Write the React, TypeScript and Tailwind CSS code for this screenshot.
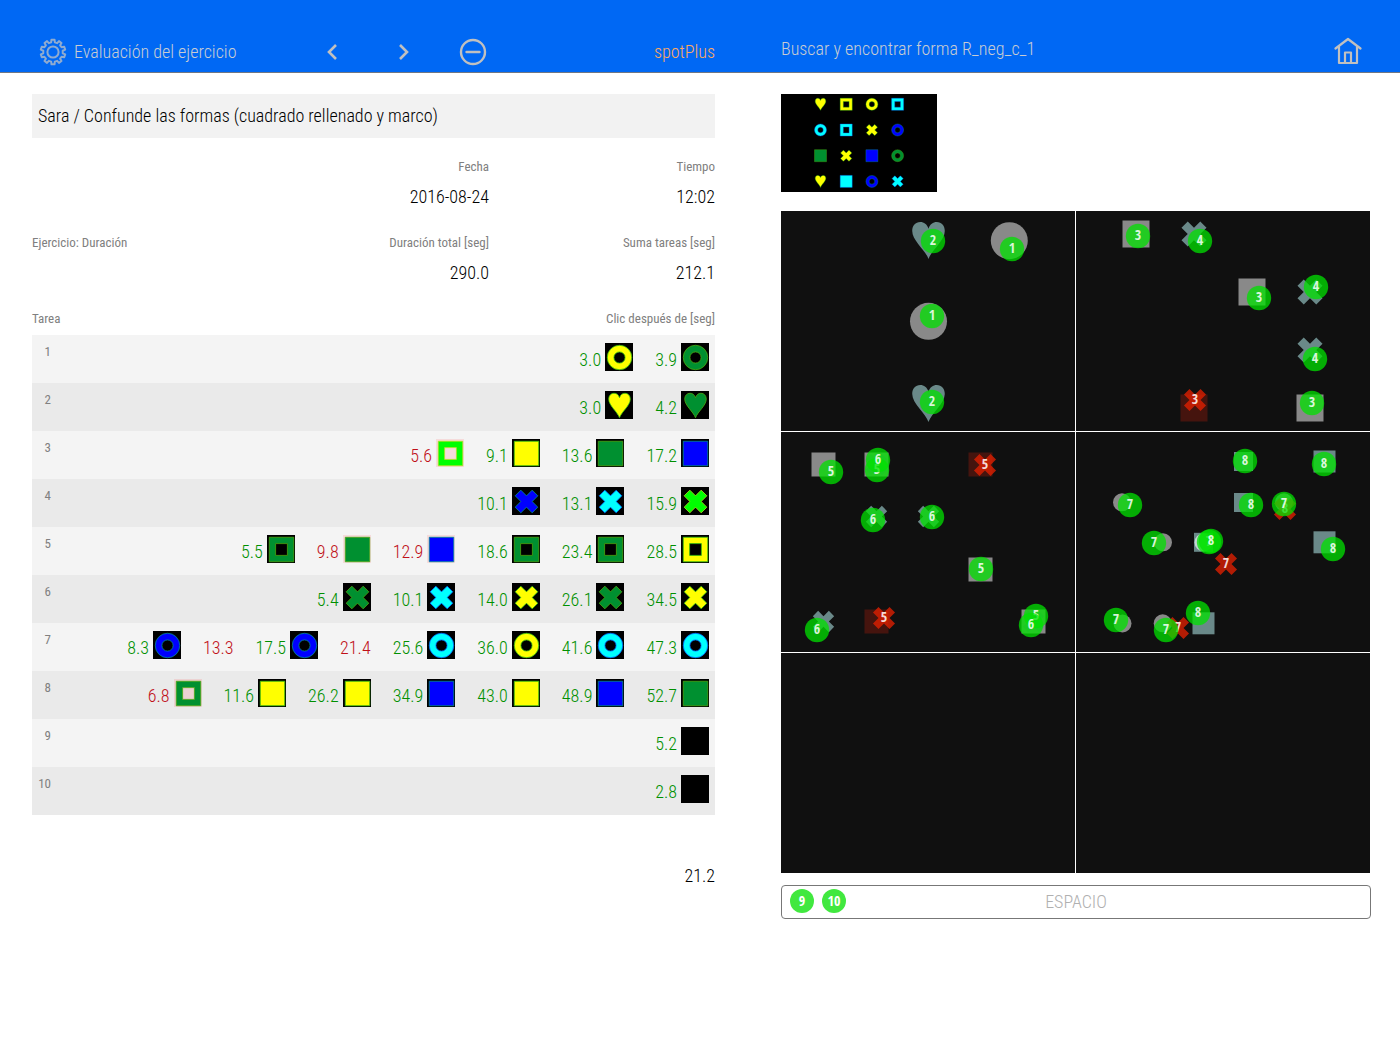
import React from 'react';

type ShapeKind = 'square' | 'frame' | 'ring' | 'circle' | 'heart' | 'cross';

interface Click {
  time: string;
  shape?: ShapeKind | 'blank';
  color?: string;
  wrong?: boolean;
}

// [kind, center x, center y, size, color]
type Target = [ShapeKind, number, number, number, string];

// [label, center x, center y, wrong]
type Marker = [string, number, number, boolean?];

interface Board {
  targets: Target[];
  markers: Marker[];
}

const YELLOW = '#ffff00';
const GREEN = '#009030';
const LIME = '#00ff00';
const BLUE = '#0000ff';
const CYAN = '#00ffff';

const GRAY = '#898989';
const TEAL = '#6a8989';
const MISSED = '#45140e';

const edges: Record<string, string> = {
  [YELLOW]: '#30c010',
  [GREEN]: '#50a810',
  [LIME]: '#b8e020',
  [BLUE]: '#009090',
  [CYAN]: '#0060ff',
};

const tasks: Click[][] = [
  [
    { time: '3.0', shape: 'ring', color: YELLOW },
    { time: '3.9', shape: 'ring', color: GREEN },
  ],
  [
    { time: '3.0', shape: 'heart', color: YELLOW },
    { time: '4.2', shape: 'heart', color: GREEN },
  ],
  [
    { time: '5.6', shape: 'frame', color: LIME, wrong: true },
    { time: '9.1', shape: 'square', color: YELLOW },
    { time: '13.6', shape: 'square', color: GREEN },
    { time: '17.2', shape: 'square', color: BLUE },
  ],
  [
    { time: '10.1', shape: 'cross', color: BLUE },
    { time: '13.1', shape: 'cross', color: CYAN },
    { time: '15.9', shape: 'cross', color: LIME },
  ],
  [
    { time: '5.5', shape: 'frame', color: GREEN },
    { time: '9.8', shape: 'square', color: GREEN, wrong: true },
    { time: '12.9', shape: 'square', color: BLUE, wrong: true },
    { time: '18.6', shape: 'frame', color: GREEN },
    { time: '23.4', shape: 'frame', color: GREEN },
    { time: '28.5', shape: 'frame', color: YELLOW },
  ],
  [
    { time: '5.4', shape: 'cross', color: GREEN },
    { time: '10.1', shape: 'cross', color: CYAN },
    { time: '14.0', shape: 'cross', color: YELLOW },
    { time: '26.1', shape: 'cross', color: GREEN },
    { time: '34.5', shape: 'cross', color: YELLOW },
  ],
  [
    { time: '8.3', shape: 'ring', color: BLUE },
    { time: '13.3', wrong: true },
    { time: '17.5', shape: 'ring', color: BLUE },
    { time: '21.4', wrong: true },
    { time: '25.6', shape: 'ring', color: CYAN },
    { time: '36.0', shape: 'ring', color: YELLOW },
    { time: '41.6', shape: 'ring', color: CYAN },
    { time: '47.3', shape: 'ring', color: CYAN },
  ],
  [
    { time: '6.8', shape: 'frame', color: GREEN, wrong: true },
    { time: '11.6', shape: 'square', color: YELLOW },
    { time: '26.2', shape: 'square', color: YELLOW },
    { time: '34.9', shape: 'square', color: BLUE },
    { time: '43.0', shape: 'square', color: YELLOW },
    { time: '48.9', shape: 'square', color: BLUE },
    { time: '52.7', shape: 'square', color: GREEN },
  ],
  [{ time: '5.2', shape: 'blank' }],
  [{ time: '2.8', shape: 'blank' }],
];

const preview: [ShapeKind, string][][] = [
  [['heart', YELLOW], ['frame', YELLOW], ['ring', YELLOW], ['frame', CYAN]],
  [['ring', CYAN], ['frame', CYAN], ['cross', YELLOW], ['ring', BLUE]],
  [['square', GREEN], ['cross', YELLOW], ['square', BLUE], ['ring', GREEN]],
  [['heart', YELLOW], ['square', CYAN], ['ring', BLUE], ['cross', CYAN]],
];

const boards: Board[] = [
  {
    targets: [
      ['heart', 147.5, 29.5, 37, TEAL],
      ['circle', 228.3, 29.7, 37, GRAY],
      ['circle', 147.5, 110.3, 37, GRAY],
      ['heart', 147.5, 192.5, 37, TEAL],
    ],
    markers: [['2', 152, 30], ['1', 231, 38], ['1', 151, 105], ['2', 151, 191]],
  },
  {
    targets: [
      ['square', 60, 23, 27, GRAY],
      ['cross', 118, 23, 27, TEAL],
      ['square', 176, 81, 27, GRAY],
      ['cross', 234, 81, 27, TEAL],
      ['cross', 234, 139, 27, TEAL],
      ['square', 118, 197, 27, MISSED],
      ['square', 234, 197, 27, GRAY],
    ],
    markers: [
      ['3', 62, 25],
      ['4', 124, 30],
      ['3', 183, 87],
      ['4', 240, 76],
      ['4', 239, 148],
      ['3', 119, 189, true],
      ['3', 236, 192],
    ],
  },
  {
    targets: [
      ['square', 42.5, 32.5, 24, GRAY],
      ['square', 95.5, 32.5, 24, GRAY],
      ['cross', 95.5, 32.5, 23, TEAL],
      ['square', 199.5, 32.5, 24, MISSED],
      ['cross', 95.5, 84.5, 23, TEAL],
      ['cross', 147.5, 84.5, 23, TEAL],
      ['square', 199.5, 137.5, 24, GRAY],
      ['cross', 42.5, 189.5, 23, TEAL],
      ['square', 95.5, 189.5, 24, MISSED],
      ['square', 252.5, 189.5, 24, GRAY],
      ['cross', 252.5, 189.5, 23, TEAL],
    ],
    markers: [
      ['5', 50, 40],
      ['5', 96, 38],
      ['6', 97, 28],
      ['5', 204, 33, true],
      ['6', 92, 88],
      ['6', 151, 85],
      ['5', 200, 137],
      ['6', 36, 198],
      ['5', 103, 186, true],
      ['5', 255, 184],
      ['6', 250, 193],
    ],
  },
  {
    targets: [
      ['square', 167.5, 29.5, 19, TEAL],
      ['square', 248.5, 29.5, 22, TEAL],
      ['circle', 46, 70.3, 18, GRAY],
      ['square', 167.5, 70.5, 19, TEAL],
      ['circle', 208, 70.3, 18, GRAY],
      ['circle', 87, 110.3, 18, GRAY],
      ['square', 127.5, 110.3, 19, TEAL],
      ['circle', 127.5, 110.3, 18, '#c5d5d5'],
      ['square', 248.5, 110.3, 22, TEAL],
      ['circle', 46.5, 191.5, 18, GRAY],
      ['circle', 86.7, 191.3, 18, GRAY],
      ['square', 127.5, 191.3, 22, TEAL],
    ],
    markers: [
      ['8', 169, 29],
      ['8', 248, 32],
      ['7', 54, 73],
      ['8', 175, 73],
      ['8', 209, 77, true],
      ['7', 208, 72],
      ['7', 78, 111],
      ['7', 133, 110],
      ['8', 135, 109],
      ['7', 150, 132, true],
      ['8', 257, 117],
      ['7', 40, 188],
      ['7', 102, 196, true],
      ['7', 90, 198],
      ['8', 122, 181],
    ],
  },
  { targets: [], markers: [] },
  { targets: [], markers: [] },
];

const HEART =
  'M0 12.5C-2 6.5 -11 0 -11 -6.5C-11 -10 -8.8 -12.5 -5.6 -12.5C-3 -12.5 -1 -11 0 -8C1 -11 3 -12.5 5.6 -12.5C8.8 -12.5 11 -10 11 -6.5C11 0 2 6.5 0 12.5Z';
const CROSS =
  'M0 -5.8L5.8 -11.6L11.6 -5.8L5.8 0L11.6 5.8L5.8 11.6L0 5.8L-5.8 11.6L-11.6 5.8L-5.8 0L-11.6 -5.8L-5.8 -11.6Z';
const SQUARE = 'M-12.5 -12.5H12.5V12.5H-12.5Z';
const FRAME = SQUARE + 'M-6 -6V6H6V-6Z';
const DISC = 'M-12.5 0A12.5 12.5 0 1 0 12.5 0A12.5 12.5 0 1 0 -12.5 0Z';
const RING = DISC + 'M-5.7 0A5.7 5.7 0 1 1 5.7 0A5.7 5.7 0 1 1 -5.7 0Z';

const paths: Record<ShapeKind, string> = {
  square: SQUARE,
  frame: FRAME,
  ring: RING,
  circle: DISC,
  heart: HEART,
  cross: CROSS,
};

interface ShapeProps {
  kind: ShapeKind;
  x: number;
  y: number;
  size: number;
  color: string;
}

function Shape({ kind, x, y, size, color }: ShapeProps) {
  return (
    <path
      d={paths[kind]}
      transform={`translate(${x} ${y}) scale(${size / 25})`}
      fill={color}
      fillRule="evenodd"
      stroke={edges[color] ?? 'none'}
      strokeWidth={edges[color] ? 0.8 : 0}
    />
  );
}

function ClickIcon({ shape, color, wrong }: Click) {
  return (
    <svg viewBox="0 0 28 28" className="w-7 h-7 shrink-0" aria-hidden="true">
      <rect width="28" height="28" fill={wrong ? '#ff0000' : '#000000'} fillOpacity={wrong ? 0.1 : 1} />
      {shape && shape !== 'blank' && color && (
        <Shape kind={shape} x={14.5} y={14.5} size={24.5} color={color} />
      )}
    </svg>
  );
}

function MarkerPin({ marker }: { marker: Marker }) {
  const [label, x, y, wrong] = marker;
  return (
    <g>
      {wrong ? (
        <path d={CROSS} transform={`translate(${x} ${y}) scale(0.95)`} fill="#e82000" fillOpacity="0.75" />
      ) : (
        <circle cx={x} cy={y} r="12.2" fill="#00e200" fillOpacity="0.75" />
      )}
      <text
        x={x}
        y={y + 4}
        textAnchor="middle"
        fill="#ffffff"
        fillOpacity="0.85"
        className="text-sm font-bold font-['Open_Sans_Condensed',sans-serif]"
      >
        {label}
      </text>
    </g>
  );
}

function GearIcon() {
  const teeth = 10;
  const points: string[] = [];
  for (let i = 0; i < teeth; i++) {
    const offsets: [number, number][] = [[-0.3, 9.8], [-0.2, 12.4], [0.2, 12.4], [0.3, 9.8]];
    offsets.forEach(([o, r]) => {
      const a = ((i + o) / teeth) * Math.PI * 2;
      points.push(`${(14 + r * Math.sin(a)).toFixed(2)} ${(14 - r * Math.cos(a)).toFixed(2)}`);
    });
  }
  return (
    <svg viewBox="0 0 28 28" className="w-7 h-7" fill="none" stroke="#8fabd0" strokeWidth="2" strokeLinejoin="round" aria-hidden="true">
      <path d={`M${points.join('L')}Z`} />
      <circle cx="14" cy="14" r="5.6" />
    </svg>
  );
}

function Header() {
  return (
    <header className="bg-[#0068f4] border-b border-[#707784] h-[73px] pl-8 pr-[29px] grid grid-cols-[683fr_590fr] gap-[66px]">
      <div className="flex items-center pt-[31px] pl-[7px]">
        <div className="flex items-center gap-[7px] w-[279px] text-[#c8ccd2]">
          <GearIcon />
          <h1>Evaluación del ejercicio</h1>
        </div>
        <div className="flex items-center text-[#c0c0c0]">
          <button type="button" aria-label="Anterior" className="mr-11">
            <svg viewBox="0 0 28 28" className="w-7 h-7" fill="none" stroke="currentColor" strokeWidth="2.6">
              <path d="M18 7L11 14L18 21" />
            </svg>
          </button>
          <button type="button" aria-label="Siguiente" className="mr-[41px]">
            <svg viewBox="0 0 28 28" className="w-7 h-7" fill="none" stroke="currentColor" strokeWidth="2.6">
              <path d="M10 7L17 14L10 21" />
            </svg>
          </button>
          <button type="button" aria-label="Quitar">
            <svg viewBox="0 0 28 28" className="w-7 h-7" fill="none" stroke="currentColor" strokeWidth="2.4">
              <circle cx="14" cy="14" r="12" />
              <path d="M7.5 14H20.5" strokeLinecap="round" />
            </svg>
          </button>
        </div>
        <span className="ml-auto text-[#ffa860]">spotPlus</span>
      </div>
      <div className="flex items-center justify-between pt-[25px]">
        <h2 className="text-[#c8ccd2]">Buscar y encontrar forma R_neg_c_1</h2>
        <a href="#" aria-label="Inicio" className="mr-[9px] mt-[5px]">
          <svg viewBox="0 0 28 28" className="w-7 h-7" fill="none" stroke="#c0c0c0" strokeWidth="2.2" strokeLinejoin="round" strokeLinecap="round">
            <path d="M1.5 11.5L14 2L26.5 11.5" />
            <path d="M5 9.5V26H23V9.5" />
            <path d="M11 26V15.5H17V26" />
          </svg>
        </a>
      </div>
    </header>
  );
}

function Stat({ label, value }: { label: string; value?: string }) {
  return (
    <div className="h-[76px]">
      <div className="text-[13px] leading-5 font-normal text-[#808080]">{label}</div>
      <div className="pt-2 leading-6 text-black">{value}</div>
    </div>
  );
}

function TaskTable() {
  return (
    <table className="w-full">
      <thead>
        <tr className="text-[13px] leading-5 text-[#808080]">
          <th className="font-normal text-left pb-[6px]">Tarea</th>
          <th className="font-normal text-right pb-[6px]">Clic después de [seg]</th>
        </tr>
      </thead>
      <tbody>
        {tasks.map((clicks, i) => (
          <tr key={i} className="h-12 odd:bg-[#f4f4f4] even:bg-[#eaeaea]">
            <td className="align-top pt-[7px] pr-2 w-[27px]">
              <div className="w-[19px] text-right text-[13px] leading-5 font-normal text-[#808080]">{i + 1}</div>
            </td>
            <td className="align-top pt-2 pr-[6px]">
              <div className="flex justify-end gap-[22px]">
                {clicks.map((click, j) => (
                  <div key={j} className="flex gap-1">
                    <span className={`pt-[5px] leading-6 ${click.wrong ? 'text-[#c01018]' : 'text-[#009000]'}`}>
                      {click.time}
                    </span>
                    {click.shape && <ClickIcon {...click} />}
                  </div>
                ))}
              </div>
            </td>
          </tr>
        ))}
      </tbody>
    </table>
  );
}

function Preview() {
  return (
    <svg viewBox="0 0 156 98" className="w-[156px] h-[98px] bg-black" role="img">
      {preview.map((row, r) =>
        row.map(([kind, color], c) => (
          <Shape
            key={`${r}-${c}`}
            kind={kind}
            x={39.5 + c * 25.7}
            y={10.3 + r * 25.7}
            size={12}
            color={color}
          />
        ))
      )}
    </svg>
  );
}

export default function App() {
  return (
    <div className="min-h-screen bg-white text-lg leading-6 font-light font-['Roboto_Condensed','Roboto_Condensed_Light',sans-serif]">
      <Header />
      <main className="pl-8 pr-[29px] pt-[21px] grid grid-cols-[683fr_590fr] gap-[66px]">
        <section>
          <div className="bg-[#f2f2f2] h-11 px-[6px] flex items-center text-black">
            Sara / Confunde las formas (cuadrado rellenado y marco)
          </div>
          <div className="grid grid-cols-[1fr_1fr_226px] pt-[19px] text-right">
            <div />
            <Stat label="Fecha" value="2016-08-24" />
            <Stat label="Tiempo" value="12:02" />
            <div className="text-left">
              <Stat label="Ejercicio: Duración" />
            </div>
            <Stat label="Duración total [seg]" value="290.0" />
            <Stat label="Suma tareas [seg]" value="212.1" />
          </div>
          <TaskTable />
          <div className="pt-[49px] text-right text-black">21.2</div>
        </section>
        <section>
          <Preview />
          <div className="grid grid-cols-2 gap-px pr-px mt-[19px]">
            {boards.map((board, i) => (
              <svg key={i} viewBox="0 0 294 220" className="w-full bg-[#101010]" role="img">
                {board.targets.map(([kind, x, y, size, color], j) => (
                  <Shape key={j} kind={kind} x={x} y={y} size={size} color={color} />
                ))}
                {board.markers.map((marker, j) => (
                  <MarkerPin key={j} marker={marker} />
                ))}
              </svg>
            ))}
          </div>
          <div className="relative mt-3 h-[34px] border border-[#777777] rounded flex items-center justify-center text-[#b0b0b0]">
            <div className="absolute left-2 top-[3px] flex gap-2">
              {['9', '10'].map((n) => (
                <span
                  key={n}
                  className="w-6 h-6 rounded-full bg-[#41e83f] text-white text-sm font-bold leading-6 text-center font-['Open_Sans_Condensed',sans-serif]"
                >
                  {n}
                </span>
              ))}
            </div>
            ESPACIO
          </div>
        </section>
      </main>
    </div>
  );
}
